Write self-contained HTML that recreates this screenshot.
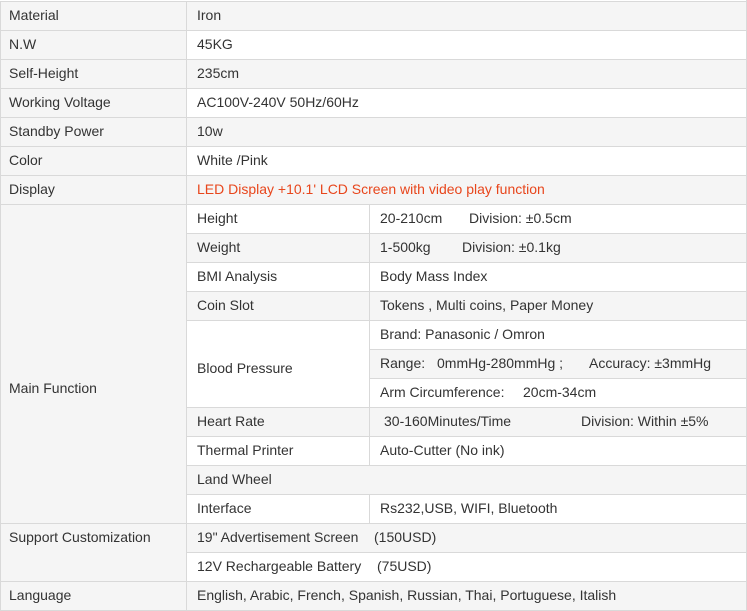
<!DOCTYPE html>
<html><head><meta charset="utf-8"><style>
body{margin:0;width:747px;height:611px;background:#fff;position:relative;overflow:hidden;font-family:"Liberation Sans",Arial,sans-serif;font-size:14px;color:#333}
.b{position:absolute;box-sizing:border-box;border-top:1px solid #d9d9d9;border-left:1px solid #d9d9d9}
.t{position:absolute;white-space:pre;line-height:16px}
</style></head><body>
<div id="c"></div>
<script>
var H=29,c=document.getElementById('c'),h='';
function box(x,y,w,hh,bg){h+='<div class="b" style="left:'+x+'px;top:'+y+'px;width:'+w+'px;height:'+hh+'px;background:'+bg+'"></div>';}
function tx(x,y,s,col){h+='<div class="t" style="left:'+x+'px;top:'+y+'px;'+(col?'color:'+col:'')+'">'+s+'</div>';}
var G='#f5f5f5',W='#fff';
function bg(i){return i%2==0?G:W;}
for(var i=0;i<21;i++){box(186,1+i*H,560,H,bg(i));}
for(var i=7;i<18;i++){ if(i==16)continue; box(369,1+i*H,377,H,bg(i)); }
box(186,1+11*H,183,3*H,W);
var L=[[0,1,'Material'],[1,1,'N.W'],[2,1,'Self-Height'],[3,1,'Working Voltage'],[4,1,'Standby Power'],[5,1,'Color'],[6,1,'Display'],[7,11,''],[18,2,''],[20,1,'Language']];
L.forEach(function(r){box(0,1+r[0]*H,186,r[1]*H,G);if(r[2])tx(9,1+r[0]*H+6,r[2]);});
tx(9,380,'Main Function');tx(9,529,'Support Customization');
function row(i,x,s,col){tx(x,1+i*H+6,s,col);}
row(0,197,'Iron');row(1,197,'45KG');row(2,197,'235cm');row(3,197,'AC100V-240V 50Hz/60Hz');row(4,197,'10w');row(5,197,'White /Pink');
row(6,197,"LED Display +10.1' LCD Screen with video play function",'#e8461c');
row(7,197,'Height');row(7,380,'20-210cm');row(7,469,'Division: ±0.5cm');
row(8,197,'Weight');row(8,380,'1-500kg');row(8,462,'Division: ±0.1kg');
row(9,197,'BMI Analysis');row(9,380,'Body Mass Index');
row(10,197,'Coin Slot');row(10,380,'Tokens , Multi coins, Paper Money');
row(11,380,'Brand: Panasonic / Omron');
row(12,380,'Range:');row(12,437,'0mmHg-280mmHg ;');row(12,589,'Accuracy: ±3mmHg');
row(13,380,'Arm Circumference:');row(13,523,'20cm-34cm');
tx(197,360,'Blood Pressure');
row(14,197,'Heart Rate');row(14,384,'30-160Minutes/Time');row(14,581,'Division: Within ±5%');
row(15,197,'Thermal Printer');row(15,380,'Auto-Cutter (No ink)');
row(16,197,'Land Wheel');
row(17,197,'Interface');row(17,380,'Rs232,USB, WIFI, Bluetooth');
row(18,197,'19" Advertisement Screen');row(18,374,'(150USD)');
row(19,197,'12V Rechargeable Battery');row(19,377,'(75USD)');
row(20,197,'English, Arabic, French, Spanish, Russian, Thai, Portuguese, Italish');
h+='<div style="position:absolute;left:0;top:610px;width:747px;height:1px;background:#d9d9d9"></div><div style="position:absolute;left:746px;top:0;width:1px;height:611px;background:#d9d9d9"></div>';
c.innerHTML=h;
</script>
</body></html>
